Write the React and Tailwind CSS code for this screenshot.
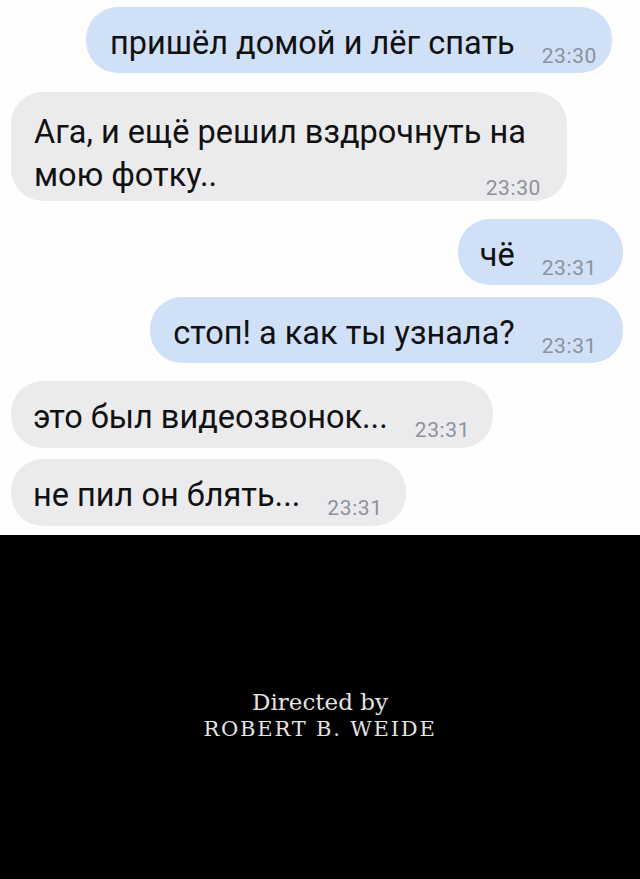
function Time({ t }) {
  return (
    <span className="relative top-[9px] ml-[27px] text-[21px] leading-none tracking-[0.6px] text-[#8c929b] shrink-0">{t}</span>
  );
}

function Bubble({ text, time, me, className }) {
  return (
    <div
      className={`${me ? 'self-end bg-[#cfe0f7]' : 'self-start bg-[#ebebee]'} rounded-[32px] h-[66px] flex items-baseline ${className}`}
    >
      <span className="text-[32.5px] leading-[72px] text-[#111]">{text}</span>
      <Time t={time} />
    </div>
  );
}

export default function App() {
  const font = { fontFamily: 'Roboto, "Liberation Sans", Arial, sans-serif' };
  return (
    <div className="w-[640px] h-[879px] bg-white flex flex-col overflow-hidden" style={font}>
      <div className="flex flex-col px-[11px] pt-[7px] h-[535px] bg-[#fefefe]">
        <Bubble me text="пришёл домой и лёг спать" time="23:30" className="mr-[17px] pl-[24px] pr-[15px]" />
        <div className="self-start mt-[19px] w-[556px] bg-[#ebebee] rounded-[32px] h-[109px] pl-[23px] pr-[26px] pt-[19px]">
          <div className="text-[32.5px] leading-[43px] text-[#111] whitespace-nowrap">Ага, и ещё решил вздрочнуть на</div>
          <div className="flex items-baseline justify-between">
            <span className="text-[32.5px] leading-[43px] text-[#111]">мою фотку..</span>
            <span className="relative top-[9px] text-[21px] leading-none tracking-[0.6px] text-[#8c929b]">23:30</span>
          </div>
        </div>
        <Bubble me text="чё" time="23:31" className="mt-[18px] mr-[6px] pl-[22px] pr-[26px] h-[65px]" />
        <Bubble me text="стоп! а как ты узнала?" time="23:31" className="mt-[12px] mr-[6px] pl-[23px] pr-[26px]" />
        <Bubble text="это был видеозвонок..." time="23:31" className="mt-[18px] pl-[22px] pr-[23px] h-[67px]" />
        <Bubble text="не пил он блять..." time="23:31" className="mt-[11px] pl-[22px] pr-[23px] h-[67px]" />
      </div>
      <div
        className="flex-1 bg-black flex flex-col items-center pt-[154px] text-[#e4e4e4]"
        style={{ fontFamily: '"DejaVu Serif", "Liberation Serif", serif' }}
      >
        <div className="text-[23px] leading-[27px]">Directed by</div>
        <div className="text-[21px] leading-[27px] tracking-[1.8px]">ROBERT B. WEIDE</div>
      </div>
    </div>
  );
}
